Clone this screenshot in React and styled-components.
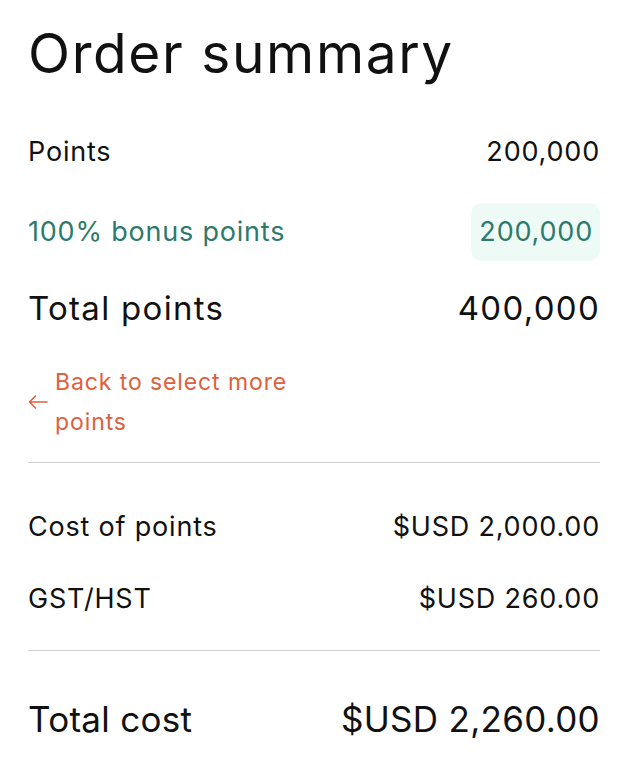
import React from 'react'
import styled, {createGlobalStyle} from 'styled-components'

const GlobalStl = createGlobalStyle`
  body {
    margin: 0;
    background: #fff;
    font-family: Inter, "Noto Sans", "Liberation Sans", sans-serif;
    font-weight: 400;
    color: #111;
  }
`

const SummaryStl = styled.div`
  display: flex;
  flex-direction: column;
  padding: 20px 28px 0 28px;
`

const TitleStl = styled.h1`
  margin: 0;
  font-size: 55px;
  line-height: 66px;
  font-weight: 400;
  letter-spacing: 1.6px;
`

const RowStl = styled.div`
  display: flex;
  justify-content: space-between;
  align-items: center;
  margin-top: ${p => p.$top}px;
  font-size: ${p => p.$size || 27}px;
  line-height: ${p => p.$lh || 40}px;
  letter-spacing: ${p => p.$ls ?? 0.8}px;
  color: ${p => p.$accent ? '#2d7a6d' : '#111'};
`

const BadgeStl = styled.span`
  display: inline-block;
  height: 58px;
  line-height: 58px;
  padding: 0 7px 0 8px;
  border-radius: 11px;
  background: #edfaf6;
`

const BackLinkStl = styled.a`
  display: flex;
  align-items: center;
  gap: 7px;
  margin-top: 32px;
  color: #e0603c;
  font-size: 23px;
  line-height: 40px;
  letter-spacing: 0.9px;
  text-decoration: none;
  cursor: pointer;
`

const BackTextStl = styled.span`
  width: 262px;
`

const DividerStl = styled.hr`
  border: none;
  border-top: 1px solid #cfcfcf;
  margin: ${p => p.$top}px 0 0 0;
`

const ArrowLeft = () => (
    <svg width="20" height="14" viewBox="0 0 20 14" fill="none">
        <path d="M19 7H1.5M7.5 1L1.5 7l6 6" stroke="#e0603c" strokeWidth="1.6" strokeLinecap="round" strokeLinejoin="round"/>
    </svg>
)

export default function App() {
    return (
        <>
            <GlobalStl/>
            <SummaryStl>
                <TitleStl>Order summary</TitleStl>

                <RowStl $top={46}>
                    <span>Points</span>
                    <span>200,000</span>
                </RowStl>
                <RowStl $top={31} $accent>
                    <span>100% bonus points</span>
                    <BadgeStl>200,000</BadgeStl>
                </RowStl>
                <RowStl $top={25} $size={33} $lh={44} $ls={1.3}>
                    <span>Total points</span>
                    <span>400,000</span>
                </RowStl>

                <BackLinkStl>
                    <ArrowLeft/>
                    <BackTextStl>Back to select more points</BackTextStl>
                </BackLinkStl>

                <DividerStl $top={20}/>

                <RowStl $top={44}>
                    <span>Cost of points</span>
                    <span>$USD 2,000.00</span>
                </RowStl>
                <RowStl $top={32}>
                    <span>GST/HST</span>
                    <span>$USD 260.00</span>
                </RowStl>

                <DividerStl $top={31}/>

                <RowStl $top={44} $size={35} $lh={48} $ls={0.3}>
                    <span>Total cost</span>
                    <span>$USD 2,260.00</span>
                </RowStl>
            </SummaryStl>
        </>
    )
}
